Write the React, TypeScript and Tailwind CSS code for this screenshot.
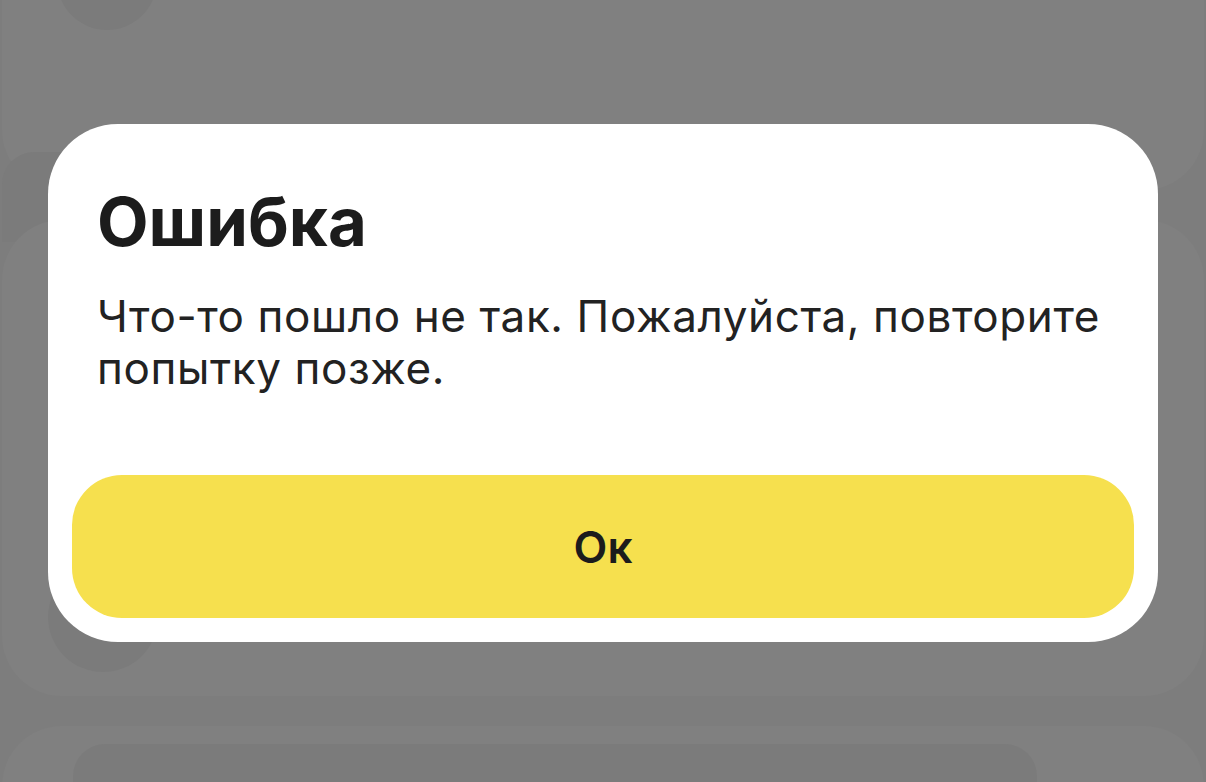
import React from 'react';

function GhostCard({ className, children }: { className: string; children?: React.ReactNode }) {
  return <div className={`mx-[2px] rounded-[60px] bg-[#808080] ${className}`}>{children}</div>;
}

export default function App() {
  return (
    <div className="relative h-[782px] w-[1206px] overflow-hidden bg-[#7d7d7d]" style={{ fontFamily: 'Inter, "Noto Sans", sans-serif' }}>
      {/* dimmed page behind the dialog */}
      <div className="flex flex-col gap-[30px]">
        <GhostCard className="-mt-[120px] h-[310px] pt-[50px] pl-[55px]">
          <div className="h-[100px] w-[100px] rounded-full bg-[#7b7b7b]" />
          <div className="mt-[122px] -ml-[55px] mx-[71px] h-[90px] w-[964px] rounded-t-[32px] bg-[#7b7b7b]" />
        </GhostCard>
        <GhostCard className="h-[476px] pt-[342px] pl-[46px]">
          <div className="h-[110px] w-[110px] rounded-full bg-[#7b7b7b]" />
        </GhostCard>
        <GhostCard className="h-[200px] pt-[18px] pl-[71px]">
          <div className="h-[120px] w-[964px] rounded-[32px] bg-[#7b7b7b]" />
        </GhostCard>
      </div>

      {/* dialog */}
      <div className="absolute left-[48px] top-[124px] flex w-[1110px] flex-col rounded-[70px] bg-white px-[24px] pt-[58px] pb-[24px]">
        <h1 className="px-[25px] text-[67px] font-bold leading-[79px] text-[#1c1c1c]">Ошибка</h1>
        <p className="mt-[29px] px-[25px] text-[44px] leading-[52px] tracking-[0.6px] text-[#222222]">
          Что-то пошло не так. Пожалуйста, повторите попытку позже.
        </p>
        <button className="mt-[81px] flex h-[143px] w-full items-center justify-center rounded-[50px] bg-[#f6e04e] text-[44px] font-semibold text-[#1c1c1c]">
          Ок
        </button>
      </div>
    </div>
  );
}
